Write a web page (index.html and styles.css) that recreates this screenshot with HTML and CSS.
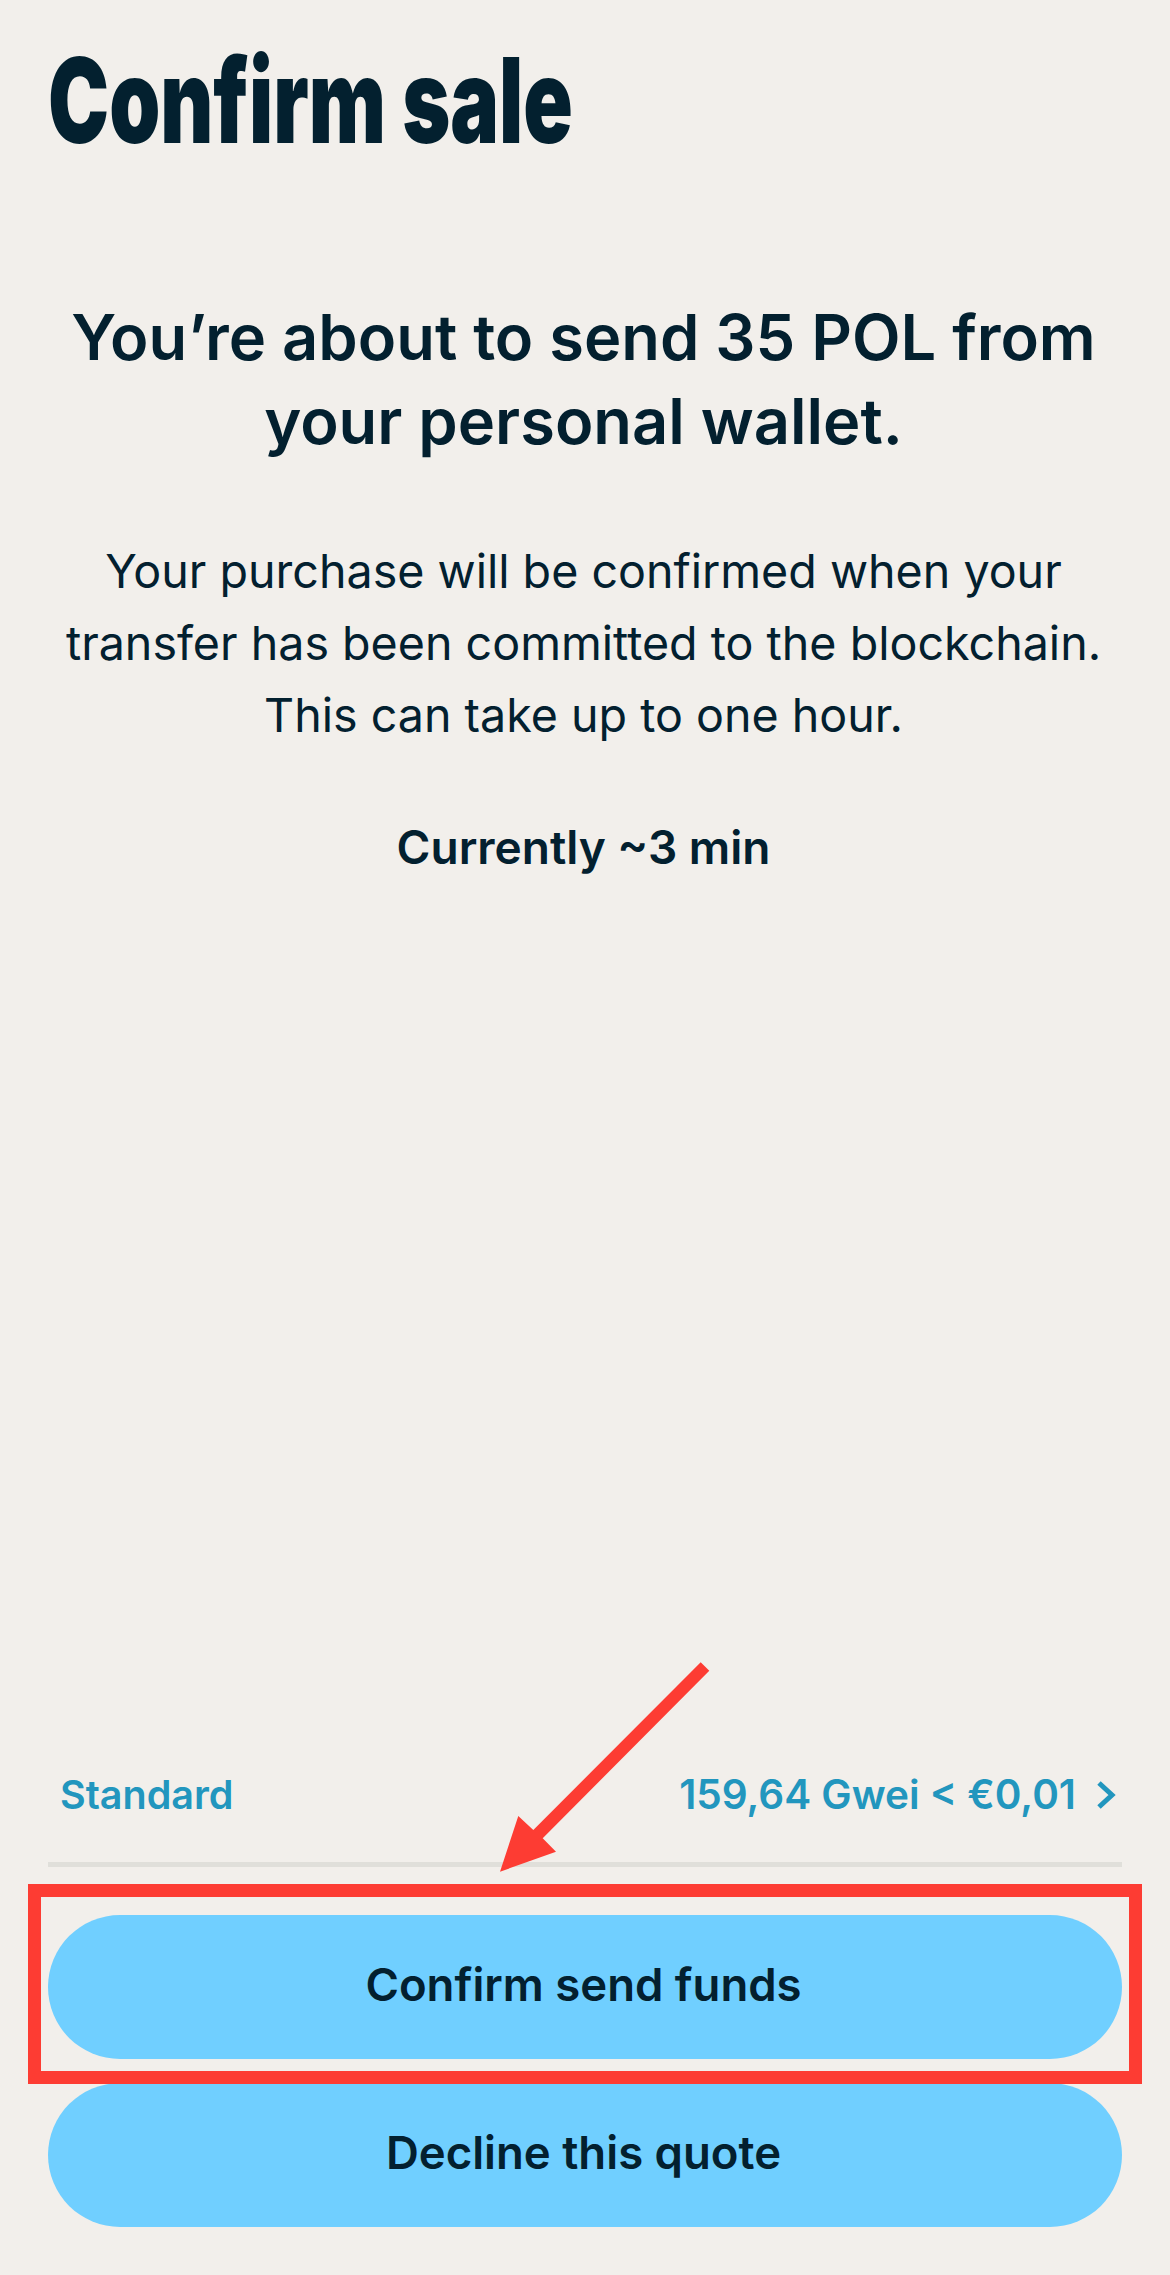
FILE: index.html
```html
<!DOCTYPE html>
<html lang="en">
<head>
  <meta charset="UTF-8" />
  <meta name="viewport" content="width=device-width, initial-scale=1.0"/>
  <title>Confirm sale</title>
  <link rel="stylesheet" href="styles.css">
</head>
<body>

  <h1 class="title">Confirm sale</h1>

  <div class="summary">
    <h2>You’re about to send 35 POL from<br>your personal wallet.</h2>
    <p>Your purchase will be confirmed when your<br>transfer has been committed to the blockchain.<br>This can take up to one hour.</p>
    <p class="eta">Currently ~3 min</p>
  </div>

  <div class="bottom">
    <div class="fee">
      <span class="fee-name">Standard</span>
      <span class="fee-value">159,64 Gwei &lt; €0,01
        <svg class="chevron" width="20" height="30" viewBox="0 0 20 30"><path d="M3 3 L16 15 L3 27" fill="none" stroke="#2296be" stroke-width="5"/></svg>
      </span>
    </div>
    <div class="divider"></div>
    <div class="actions">
      <button>Confirm send funds</button>
      <button>Decline this quote</button>
      <div class="highlight"></div>
    </div>
  </div>

  <!-- annotation arrow, page coordinates -->
  <svg class="arrow" width="1170" height="2275" viewBox="0 0 1170 2275">
    <polygon fill="#fd3c33" points="700.7,1662.3 709.3,1670.7 542.7,1838.3 556,1851.7 500,1871.7 518.3,1816 533.3,1830"/>
  </svg>

</body>
</html>
```

FILE: styles.css
```css
* {
  box-sizing: border-box;
}
body {
  margin: 0;
  height: 2275px;
  padding: 0 48px 48px;
  position: relative;
  display: flex;
  flex-direction: column;
  background: #f2efeb;
  color: #03202f;
  font-family: Inter, sans-serif;
  overflow: hidden;
}
.title {
  margin: 36px 0 0;
  font-size: 118px;
  line-height: 128px;
  font-weight: 900;
  white-space: nowrap;
  transform: scaleX(0.693);
  transform-origin: left center;
}
.summary {
  margin: 131px -20px 0;
  padding-right: 3px;
  text-align: center;
}
.summary h2 {
  margin: 0;
  font-size: 63.2px;
  line-height: 84px;
  font-weight: 600;
}
.summary p {
  margin: 72px 0 0;
  font-size: 46.6px;
  line-height: 72px;
}
.summary .eta {
  margin-top: 60px;
  font-size: 46px;
  font-weight: 600;
}
.bottom {
  margin-top: auto;
}
.fee {
  display: flex;
  justify-content: space-between;
  align-items: center;
  padding: 0 6px 0 12px;
  line-height: 56px;
  font-weight: 600;
  color: #2296be;
}
.fee-name {
  font-size: 39.5px;
}
.fee-value {
  display: flex;
  align-items: center;
  gap: 20px;
  font-size: 40.5px;
}
.divider {
  height: 5px;
  margin-top: 39px;
  background: #e0dfda;
}
.actions {
  position: relative;
  margin-top: 48px;
  display: flex;
  flex-direction: column;
  gap: 24px;
}
.actions button {
  height: 144px;
  padding: 0 3px 6px 0;
  border: none;
  border-radius: 72px;
  background: #70cfff;
  color: #03202f;
  font-family: Inter, sans-serif;
  font-size: 45.5px;
  font-weight: 600;
}
.highlight {
  position: absolute;
  left: -20px;
  right: -20px;
  top: -31px;
  height: 200px;
  border: 13px solid #fd3c33;
}
.arrow {
  position: absolute;
  left: 0;
  top: 0;
  pointer-events: none;
}
```
